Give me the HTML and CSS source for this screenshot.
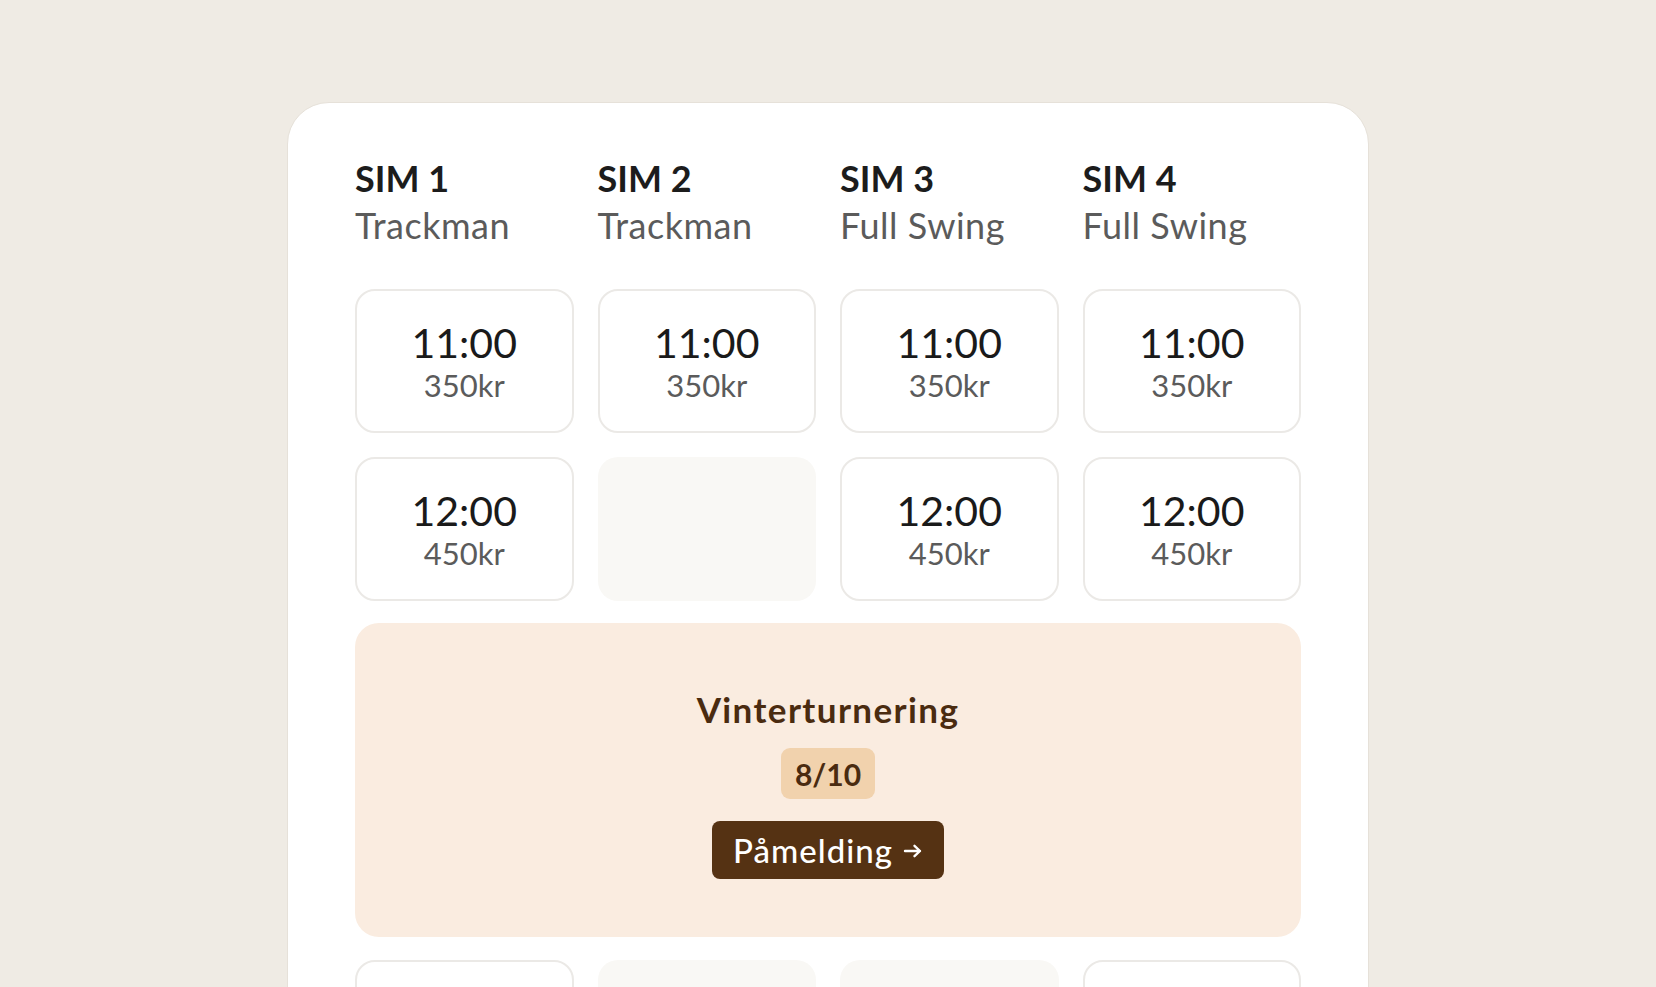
FILE: index.html
```html
<!DOCTYPE html>
<html lang="no">
<head>
<meta charset="utf-8">
<title>Booking</title>
<link rel="stylesheet" href="styles.css">
</head>
<body>
<main class="card">
  <div class="grid">
    <div class="sim"><div class="sim-name">SIM 1</div><div class="sim-type">Trackman</div></div>
    <div class="sim"><div class="sim-name">SIM 2</div><div class="sim-type">Trackman</div></div>
    <div class="sim"><div class="sim-name">SIM 3</div><div class="sim-type">Full Swing</div></div>
    <div class="sim"><div class="sim-name">SIM 4</div><div class="sim-type">Full Swing</div></div>

    <div class="slot"><div class="time">11:00</div><div class="price">350kr</div></div>
    <div class="slot"><div class="time">11:00</div><div class="price">350kr</div></div>
    <div class="slot"><div class="time">11:00</div><div class="price">350kr</div></div>
    <div class="slot"><div class="time">11:00</div><div class="price">350kr</div></div>

    <div class="slot"><div class="time">12:00</div><div class="price">450kr</div></div>
    <div class="slot empty"></div>
    <div class="slot"><div class="time">12:00</div><div class="price">450kr</div></div>
    <div class="slot"><div class="time">12:00</div><div class="price">450kr</div></div>

    <div class="event">
      <div class="event-title">Vinterturnering</div>
      <div class="event-count">8/10</div>
      <button class="event-btn"><span class="btn-label">Påmelding</span><svg class="arrow" viewBox="0 0 20 16" width="20" height="16"><path d="M2 8h15M11.5 2.8 17 8l-5.5 5.2" fill="none" stroke="#fff" stroke-width="2.4" stroke-linecap="round" stroke-linejoin="round"/></svg></button>
    </div>

    <div class="slot"><div class="time">14:00</div><div class="price">450kr</div></div>
    <div class="slot empty"></div>
    <div class="slot empty"></div>
    <div class="slot"><div class="time">14:00</div><div class="price">450kr</div></div>
  </div>
</main>
</body>
</html>
```

FILE: styles.css
```css
html, body {
  margin: 0;
  padding: 0;
}
body {
  background: #efebe4;
  font-family: Lato, "Noto Sans", sans-serif;
  height: 987px;
  overflow: hidden;
}
.card {
  width: 1082px;
  box-sizing: border-box;
  margin: 102px auto 0;
  background: #ffffff;
  border: 1px solid #e6e1d9;
  border-radius: 42px;
  padding: 52px 67px 60px 67px;
}
.grid {
  display: grid;
  grid-template-columns: repeat(4, 1fr);
  column-gap: 24px;
  row-gap: 24px;
}
.sim {
  margin-bottom: 16px;
}
.sim-name {
  font-size: 36px;
  line-height: 47px;
  font-weight: 700;
  color: #1c1c1c;
}
.sim-type {
  font-size: 36px;
  line-height: 47px;
  font-weight: 400;
  color: #5b5b5b;
  letter-spacing: 0.5px;
}
.slot {
  height: 144px;
  box-sizing: border-box;
  border: 2px solid #ebe9e6;
  border-radius: 20px;
  display: flex;
  flex-direction: column;
  align-items: center;
  justify-content: center;
  padding-top: 4px;
}
.slot.empty {
  border-color: transparent;
  background: #f9f8f5;
}
.time {
  font-size: 41px;
  line-height: 44px;
  color: #1a1a1a;
}
.price {
  font-size: 31px;
  line-height: 40px;
  color: #5b5b5b;
}
.event {
  grid-column: 1 / -1;
  height: 314px;
  margin-top: -2px;
  margin-bottom: -1px;
  background: #faece0;
  border-radius: 24px;
  display: flex;
  flex-direction: column;
  align-items: center;
  justify-content: center;
  padding-top: 6px;
  box-sizing: border-box;
}
.event-title {
  font-size: 35px;
  line-height: 44px;
  font-weight: 700;
  color: #4a2b10;
  letter-spacing: 1.4px;
}
.event-count {
  margin-top: 17px;
  width: 94px;
  height: 51px;
  box-sizing: border-box;
  background: #f1d2ad;
  border-radius: 9px;
  color: #4a2b10;
  font-size: 30px;
  font-weight: 700;
  display: flex;
  align-items: center;
  justify-content: center;
}
.event-btn {
  margin-top: 22px;
  width: 232px;
  height: 58px;
  border: none;
  border-radius: 8px;
  background: #553213;
  color: #ffffff;
  font-family: Lato, "Noto Sans", sans-serif;
  font-size: 33px;
  font-weight: 500;
  display: flex;
  align-items: center;
  justify-content: center;
  gap: 10px;
  padding: 0;
}
.btn-label {
  letter-spacing: 1px;
}
.arrow {
  display: block;
  margin-top: 1px;
}
```
